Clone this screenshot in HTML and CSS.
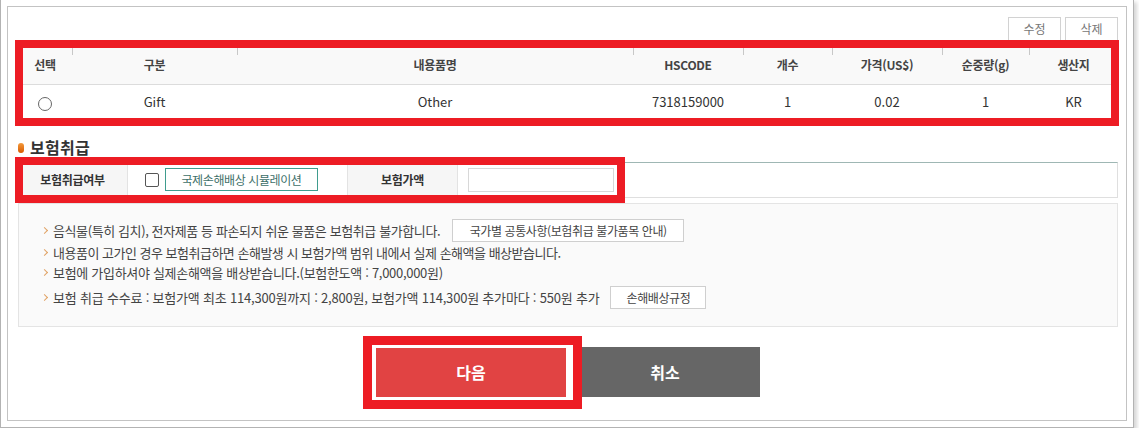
FILE: index.html
```html
<!DOCTYPE html>
<html lang="ko">
<head>
<meta charset="utf-8">
<title>보험취급</title>
<link rel="stylesheet" href="styles.css">
</head>
<body>
<div class="frame">
  <div class="panel">
    <div class="toolbar">
      <button class="tbtn" type="button">수정</button>
      <button class="tbtn" type="button">삭제</button>
    </div>

    <div class="mark-wrap">
      <table class="items">
        <colgroup>
          <col style="width:54px"><col style="width:165px"><col style="width:396px"><col style="width:110px">
          <col style="width:89px"><col style="width:110px"><col style="width:87px"><col style="width:89px">
        </colgroup>
        <thead>
          <tr>
            <th class="first">선택</th><th>구분</th><th>내용품명</th><th>HSCODE</th>
            <th>개수</th><th>가격(US$)</th><th>순중량(g)</th><th>생산지</th>
          </tr>
        </thead>
        <tbody>
          <tr>
            <td><span class="radio"></span></td><td>Gift</td><td>Other</td><td>7318159000</td>
            <td>1</td><td>0.02</td><td>1</td><td>KR</td>
          </tr>
        </tbody>
      </table>
      <div class="mark mark-table"></div>
    </div>

    <h3 class="sec-title"><span class="pill"></span>보험취급</h3>

    <div class="mark-wrap">
      <div class="ins">
        <div class="ins-label">보험취급여부</div>
        <div class="ins-check">
          <span class="checkbox"></span>
          <button class="sim-btn" type="button">국제손해배상 시뮬레이션</button>
        </div>
        <div class="ins-label ins-label2">보험가액</div>
        <div class="ins-input"><span class="input"></span></div>
      </div>
      <div class="mark mark-ins"></div>
    </div>

    <div class="notice">
      <ul>
        <li class="tall">음식물(특히 김치), 전자제품 등 파손되지 쉬운 물품은 보험취급 불가합니다. <button class="nbtn nbtn1" type="button">국가별 공통사항(보험취급 불가품목 안내)</button></li>
        <li class="l2">내용품이 고가인 경우 보험취급하면 손해발생 시 보험가액 범위 내에서 실제 손해액을 배상받습니다.</li>
        <li class="l3">보험에 가입하셔야 실제손해액을 배상받습니다.(보험한도액 : 7,000,000원)</li>
        <li class="tall last">보험 취급 수수료 : 보험가액 최초 114,300원까지 : 2,800원, 보험가액 114,300원 추가마다 : 550원 추가 <button class="nbtn nbtn2" type="button">손해배상규정</button></li>
      </ul>
    </div>

    <div class="actions">
      <div class="mark-wrap">
        <button class="abtn next" type="button">다음</button>
        <div class="mark mark-btn"></div>
      </div>
      <button class="abtn cancel" type="button">취소</button>
    </div>
  </div>
</div>
</body>
</html>
```

FILE: styles.css
```css
* { box-sizing: border-box; }
html, body { margin: 0; padding: 0; background: #fff; }
body {
  font-family: "Noto Sans CJK KR", "Noto Sans", sans-serif;
  color: #333;
  font-size: 13px;
}
button { font-family: inherit; cursor: pointer; }

.frame {
  width: 1134px;
  margin-top: -1px;
  border: 1px solid #b3b3b3;
  padding: 6px;
  box-shadow: 3px 3px 4px rgba(0,0,0,0.16);
}
.panel {
  width: 1120px;
  height: 415px;
  border: 1px solid #c3c3c3;
  padding: 10px 8px 0 10px;
}

.toolbar {
  display: flex;
  justify-content: flex-end;
  gap: 4px;
  height: 22px;
  margin-bottom: 4px;
}
.tbtn {
  width: 53px;
  height: 24px;
  background: #fff;
  border: 1px solid #d2d2d2;
  color: #777;
  font-size: 12px;
  padding: 0;
  line-height: 20px;
}

.mark-wrap { position: relative; }
.mark {
  position: absolute;
  border: 8px solid #ed1c24;
  pointer-events: none;
}
.mark-table { left: -3px; top: -3px; width: 1104px; height: 86px; }
.mark-ins { left: -3px; top: -5px; width: 610px; height: 46px; }
.mark-btn { left: -13px; top: -11px; width: 219px; height: 73px; border-width: 9px; box-shadow: inset 0 0 0 3px #fff; }

.items {
  width: 1100px;
  table-layout: fixed;
  border-collapse: collapse;
  border-top: 1px solid #9fb7b4;
}
.items th {
  height: 41px;
  padding: 0;
  font-size: 12px;
  font-weight: 700;
  color: #444;
  letter-spacing: -0.3px;
  border-bottom: 1px solid #dcdcdc;
  background: linear-gradient(#c8c8c8, #c8c8c8) left 1px / 1px 10px no-repeat, #f9f9f9;
}
.items th.first { background: #f9f9f9; }
.items td {
  height: 35px;
  padding: 0 0 1px;
  text-align: center;
  font-size: 13px;
  color: #333;
}
.radio {
  display: inline-block;
  width: 14px;
  height: 14px;
  border: 1px solid #666;
  border-radius: 50%;
  vertical-align: middle;
  margin-top: 2px;
}

.sec-title {
  display: flex;
  align-items: center;
  gap: 6px;
  margin: 17px 0 5px;
  height: 20px;
  font-size: 16px;
  font-weight: 700;
  color: #333;
  letter-spacing: 0.3px;
}
.pill {
  width: 6px;
  height: 10px;
  border-radius: 3px;
  background: linear-gradient(#f39a3c, #d85a00);
  margin-top: 3px;
}

.ins {
  display: flex;
  height: 36px;
  border-top: 1px solid #9fb7b4;
  border-bottom: 1px solid #dfdfdf;
  border-right: 1px solid #dfdfdf;
}
.ins-label {
  width: 110px;
  display: flex;
  align-items: center;
  justify-content: center;
  background: #f6f6f6;
  border-right: 1px solid #e3e3e3;
  font-size: 12px;
  font-weight: 700;
  color: #333;
  letter-spacing: -0.3px;
}
.ins-label2 { width: 111px; border-left: 1px solid #e3e3e3; }
.ins-check {
  width: 219px;
  display: flex;
  align-items: center;
  padding-left: 17px;
  gap: 6px;
}
.checkbox {
  width: 14px;
  height: 14px;
  border: 1px solid #555;
  border-radius: 2px;
  background: #fff;
}
.sim-btn {
  width: 153px;
  height: 23px;
  padding: 0;
  background: #fff;
  border: 1px solid #3f9c8e;
  color: #3d6f69;
  font-size: 12px;
  letter-spacing: -0.4px;
}
.ins-input {
  flex: 1;
  display: flex;
  align-items: center;
  padding-left: 10px;
}
.input {
  width: 146px;
  height: 24px;
  border: 1px solid #d8d8d8;
  background: #fff;
}

.notice {
  margin-top: 5px;
  height: 124px;
  background: #fafafa;
  border: 1px solid #e4e4e4;
  padding: 15px 0 0 23px;
}
.notice ul { list-style: none; margin: 0; padding: 0; }
.notice li {
  display: flex;
  align-items: center;
  height: 20px;
  font-size: 13px;
  color: #444;
  letter-spacing: -0.4px;
  white-space: nowrap;
}
.notice li.l2 { letter-spacing: -0.5px; }
.notice li.l3 { letter-spacing: -0.3px; }
.notice li.last { letter-spacing: -0.2px; margin-top: 3px; }
.notice li::before {
  content: "";
  width: 4px;
  height: 4px;
  border-top: 1.5px solid #e0a264;
  border-right: 1.5px solid #e0a264;
  transform: rotate(45deg);
  margin: 0 6px 0 0;
  flex: none;
}
.notice li.tall { height: 24px; }
.nbtn {
  height: 23px;
  padding: 0;
  margin-left: 12px;
  background: #fff;
  border: 1px solid #cfcfcf;
  color: #444;
  font-size: 12px;
  letter-spacing: -0.4px;
}
.nbtn1 { width: 232px; }
.nbtn2 { width: 96px; margin-left: 11px; }

.actions {
  display: flex;
  justify-content: center;
  gap: 4px;
  margin-top: 20px;
}
.abtn {
  width: 190px;
  height: 50px;
  border: 0;
  padding: 0;
  color: #fff;
  font-size: 16px;
  font-weight: 700;
}
.next { display: block; background: #e14343; }
.cancel { background: #666; }
```
